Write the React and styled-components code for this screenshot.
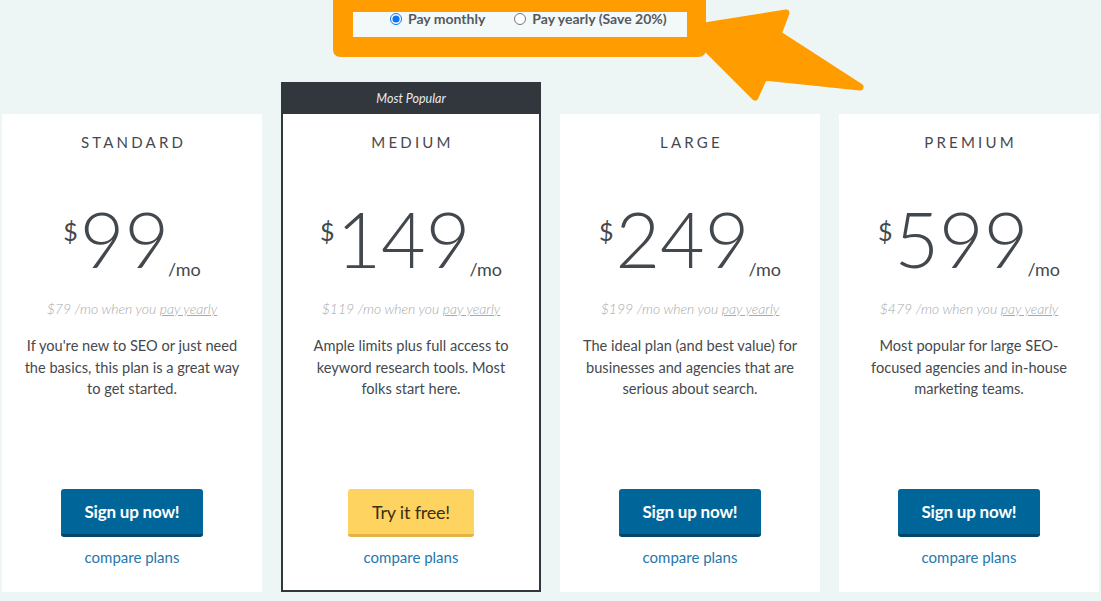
import React from "react";
import styled, { createGlobalStyle } from "styled-components";

const GlobalStyle = createGlobalStyle`
  html, body {
    margin: 0;
    padding: 0;
  }
  body {
    background: #eef6f5;
    font-family: Lato, "Open Sans", sans-serif;
  }
`;

const Page = styled.div`
  position: relative;
  width: 1101px;
  height: 601px;
  overflow: hidden;
`;

const BillingBar = styled.div`
  height: 82px;
  padding-top: 12px;
  box-sizing: border-box;
`;

const RadioGroup = styled.div`
  margin-left: 353px;
  width: 334px;
  height: 25px;
  box-sizing: border-box;
  padding-left: 37px;
  background: #f3f9f9;
  display: flex;
  align-items: flex-start;
  gap: 29px;
`;

const RadioLabel = styled.label`
  display: flex;
  align-items: center;
  gap: 6px;
  font-size: 14px;
  line-height: 13px;
  font-weight: 700;
  color: #555a60;
  white-space: nowrap;

  input {
    margin: 0;
    width: 12px;
    height: 12px;
    accent-color: #0a75f0;
  }
`;

const Annotation = styled.svg`
  position: absolute;
  left: 0;
  top: 0;
  pointer-events: none;
`;

const PlanRow = styled.div`
  display: flex;
  align-items: flex-end;
  gap: 19px;
  padding-left: 2px;
  height: 510px;
`;

const Card = styled.div`
  width: 260px;
  height: ${(p) => (p.$featured ? 510 : 478)}px;
  box-sizing: border-box;
  background: #fff;
  border: ${(p) => (p.$featured ? "2px solid #32363d" : "none")};
  display: flex;
  flex-direction: column;
`;

const Ribbon = styled.div`
  height: 30px;
  flex-shrink: 0;
  background: #32363d;
  color: #e8eaec;
  font-size: 12.5px;
  font-style: italic;
  line-height: 30px;
  text-align: center;
`;

const CardBody = styled.div`
  flex: 1;
  display: flex;
  flex-direction: column;
  align-items: center;
  text-align: center;
  padding: 0 16px ${(p) => (p.$featured ? 23 : 25)}px;
`;

const PlanName = styled.h3`
  margin: 14px 0 0;
  padding-left: 3px;
  font-size: 15px;
  line-height: 28px;
  font-weight: 400;
  letter-spacing: 3.2px;
  color: #45494e;
`;

const PriceRow = styled.div`
  margin-top: 44px;
  height: 76px;
  display: flex;
  align-items: flex-start;
  justify-content: center;
  color: #43484e;
`;

const Dollar = styled.span`
  font-size: 25px;
  line-height: 24px;
  font-weight: 400;
  margin: 19px 2px 0 0;
`;

const Amount = styled.span`
  font-size: 77px;
  line-height: 76px;
  font-weight: 300;
`;

const Per = styled.span`
  align-self: flex-end;
  font-size: 18px;
  line-height: 18px;
  font-weight: 400;
  margin: 0 0 -2px -1px;
`;

const Yearly = styled.div`
  margin-top: 23px;
  font-size: 14px;
  line-height: 20px;
  font-style: italic;
  font-weight: 300;
  color: #a7a9ab;

  span {
    text-decoration: underline;
  }
`;

const Description = styled.p`
  margin: 16px 0 0;
  font-size: 14.6px;
  line-height: 21.5px;
  color: #45494e;
`;

const CtaButton = styled.button`
  margin-top: auto;
  height: 48px;
  padding: 0 24px;
  border: none;
  border-radius: 3px;
  border-bottom: 3px solid ${(p) => (p.$variant === "trial" ? "#e5b245" : "#00476b")};
  background: ${(p) => (p.$variant === "trial" ? "#ffd35f" : "#00669a")};
  color: ${(p) => (p.$variant === "trial" ? "#3a2f12" : "#ffffff")};
  font-family: Lato, "Open Sans", sans-serif;
  font-size: ${(p) => (p.$variant === "trial" ? 18 : 17)}px;
  font-weight: ${(p) => (p.$variant === "trial" ? 400 : 700)};
  letter-spacing: -0.2px;
  cursor: pointer;
`;

const CompareLink = styled.a`
  margin-top: 10px;
  font-size: 15px;
  line-height: 20px;
  color: #2478ad;
  text-decoration: none;
`;

const plans = [
  {
    name: "STANDARD",
    price: 99,
    yearly: 79,
    lines: ["If you're new to SEO or just need", "the basics, this plan is a great way", "to get started."],
  },
  {
    name: "MEDIUM",
    price: 149,
    yearly: 119,
    featured: true,
    lines: ["Ample limits plus full access to", "keyword research tools. Most", "folks start here."],
  },
  {
    name: "LARGE",
    price: 249,
    yearly: 199,
    lines: ["The ideal plan (and best value) for", "businesses and agencies that are", "serious about search."],
  },
  {
    name: "PREMIUM",
    price: 599,
    yearly: 479,
    lines: ["Most popular for large SEO-", "focused agencies and in-house", "marketing teams."],
  },
];

const PlanCard = ({ plan }) => (
  <Card $featured={plan.featured}>
    {plan.featured && <Ribbon>Most Popular</Ribbon>}
    <CardBody $featured={plan.featured}>
      <PlanName>{plan.name}</PlanName>
      <PriceRow>
        <Dollar>$</Dollar>
        <Amount>{plan.price}</Amount>
        <Per>/mo</Per>
      </PriceRow>
      <Yearly>
        ${plan.yearly} /mo when you <span>pay yearly</span>
      </Yearly>
      <Description>
        {plan.lines.map((line, i) => (
          <React.Fragment key={i}>
            {line}
            {i < plan.lines.length - 1 && <br />}
          </React.Fragment>
        ))}
      </Description>
      <CtaButton $variant={plan.featured ? "trial" : "signup"}>
        {plan.featured ? "Try it free!" : "Sign up now!"}
      </CtaButton>
      <CompareLink href="#">compare plans</CompareLink>
    </CardBody>
  </Card>
);

const App = () => {
  return (
    <Page>
      <GlobalStyle />
      <BillingBar>
        <RadioGroup>
          <RadioLabel>
            <input type="radio" name="billing" defaultChecked />
            Pay monthly
          </RadioLabel>
          <RadioLabel>
            <input type="radio" name="billing" />
            Pay yearly (Save 20%)
          </RadioLabel>
        </RadioGroup>
      </BillingBar>
      <PlanRow>
        {plans.map((plan) => (
          <PlanCard key={plan.name} plan={plan} />
        ))}
      </PlanRow>
      <Annotation width="1101" height="110" viewBox="0 0 1101 110">
        <path
          fill="#ff9c00"
          fillRule="evenodd"
          d="M333 -10 H706 V49 Q706 57 698 57 H341 Q333 57 333 49 Z M353 12 V37 H687 V12 Z"
        />
        <polygon
          fill="#ff9c00"
          stroke="#ff9c00"
          strokeWidth="7"
          strokeLinejoin="round"
          points="692,28 786,13 778,34 860,87 764,77 755,97 706,48"
        />
      </Annotation>
    </Page>
  );
};

export default App;
